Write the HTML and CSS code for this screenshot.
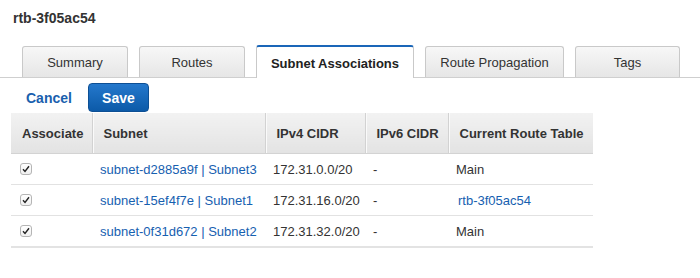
FILE: index.html
```html
<!DOCTYPE html>
<html lang="en">
<head>
  <meta charset="UTF-8">
  <meta name="viewport" content="width=device-width, initial-scale=1.0">
  <title>rtb-3f05ac54</title>
  <link rel="stylesheet" href="styles.css">
</head>
<body>
  <h1 class="titulo">rtb-3f05ac54</h1>

  <div class="abas">
    <div class="aba w-summary">Summary</div>
    <div class="aba w-routes">Routes</div>
    <div class="aba ativa w-subnet">Subnet Associations</div>
    <div class="aba w-prop">Route Propagation</div>
    <div class="aba w-tags">Tags</div>
  </div>

  <div class="acoes">
    <a class="cancelar" href="#">Cancel</a>
    <button class="salvar">Save</button>
  </div>

  <table class="tabela">
    <colgroup>
      <col class="c1"><col class="c2"><col class="c3"><col class="c4"><col class="c5">
    </colgroup>
    <thead>
      <tr>
        <th>Associate</th>
        <th>Subnet</th>
        <th>IPv4 CIDR</th>
        <th>IPv6 CIDR</th>
        <th>Current Route Table</th>
      </tr>
    </thead>
    <tbody>
      <tr>
        <td><span class="check"><svg width="8" height="8" viewBox="0 0 8 8"><path d="M1 4.2 L3 6.4 L7 1.2" fill="none" stroke="#222" stroke-width="1.4"/></svg></span></td>
        <td><a href="#">subnet-d2885a9f | Subnet3</a></td>
        <td>172.31.0.0/20</td>
        <td>-</td>
        <td>Main</td>
      </tr>
      <tr>
        <td><span class="check"><svg width="8" height="8" viewBox="0 0 8 8"><path d="M1 4.2 L3 6.4 L7 1.2" fill="none" stroke="#222" stroke-width="1.4"/></svg></span></td>
        <td><a href="#">subnet-15ef4f7e | Subnet1</a></td>
        <td>172.31.16.0/20</td>
        <td>-</td>
        <td><a class="rtb" href="#">rtb-3f05ac54</a></td>
      </tr>
      <tr>
        <td><span class="check"><svg width="8" height="8" viewBox="0 0 8 8"><path d="M1 4.2 L3 6.4 L7 1.2" fill="none" stroke="#222" stroke-width="1.4"/></svg></span></td>
        <td><a href="#">subnet-0f31d672 | Subnet2</a></td>
        <td>172.31.32.0/20</td>
        <td>-</td>
        <td>Main</td>
      </tr>
    </tbody>
  </table>
</body>
</html>
```

FILE: styles.css
```css
body{
  margin: 0;
  font-family: "Liberation Sans", Arial, sans-serif;
  font-size: 13px;
  color: #333;
  background: #fff;
}
a{
  color: #1660b0;
  text-decoration: none;
}

.titulo{
  margin: 0;
  padding: 10px 13px 0;
  font-size: 14px;
  line-height: 17px;
  font-weight: bold;
  color: #333;
}

.abas{
  display: flex;
  align-items: flex-end;
  gap: 11px;
  margin-top: 18px;
  padding-left: 22px;
  border-bottom: 1px solid #cfcfcf;
}
.aba{
  box-sizing: border-box;
  height: 31px;
  display: flex;
  align-items: center;
  justify-content: center;
  border: 1px solid #c9c9c9;
  border-bottom: none;
  border-radius: 3px 3px 0 0;
  background: linear-gradient(#f7f7f7, #e6e6e6);
  color: #333;
  white-space: nowrap;
}
.ativa{
  height: 33px;
  margin-bottom: -1px;
  padding-top: 1px;
  border-top: 2px solid #1a66b8;
  background: #fff;
  font-weight: bold;
  color: #222;
}
.w-summary{ width: 106px; }
.w-routes{ width: 106px; }
.w-subnet{ width: 158px; }
.w-prop{ width: 139px; }
.w-tags{ width: 105px; }

.acoes{
  display: flex;
  align-items: center;
  gap: 16px;
  margin-top: 5px;
  padding-left: 26px;
}
.cancelar{
  font-weight: bold;
  font-size: 14px;
  color: #1a5fae;
}
.salvar{
  width: 61px;
  height: 29px;
  padding: 0;
  color: white;
  font-family: inherit;
  font-size: 14px;
  font-weight: bold;
  border: 1px solid #0d4f94;
  border-radius: 4px;
  background: linear-gradient(#2478cc, #0c5aa8);
  cursor: pointer;
}

.tabela{
  margin: 1px 0 0 11px;
  width: 582px;
  border-collapse: collapse;
  table-layout: fixed;
}
.c1{ width: 81px; }
.c2{ width: 173px; }
.c3{ width: 100px; }
.c4{ width: 83px; }
.c5{ width: 145px; }

.tabela th{
  height: 40px;
  padding: 0 2px 0 11px;
  text-align: left;
  font-weight: bold;
  color: #333;
  white-space: nowrap;
  overflow: visible;
  background: linear-gradient(#f2f2f2, #e3e3e3);
  border-bottom: 1px solid #d3d3d3;
  border-left: 1px solid #d2d2d2;
  box-shadow: inset 1px 0 0 #fafafa;
}
.tabela th:first-child{
  border-left: none;
  box-shadow: none;
}
.tabela td{
  height: 30px;
  padding: 0 8px;
  border-bottom: 1px solid #e2e2e2;
  white-space: nowrap;
}
.tabela td:first-child{
  padding-left: 9px;
}
.tabela tr:last-child td{
  border-bottom: 2px solid #e3e3e3;
}
.rtb{
  margin-left: 2px;
}

.check{
  box-sizing: border-box;
  display: flex;
  align-items: center;
  justify-content: center;
  width: 12px;
  height: 12px;
  border: 1px solid #b5b5b5;
  border-radius: 3px;
  background: linear-gradient(#fff, #f0f0f0);
}
```
